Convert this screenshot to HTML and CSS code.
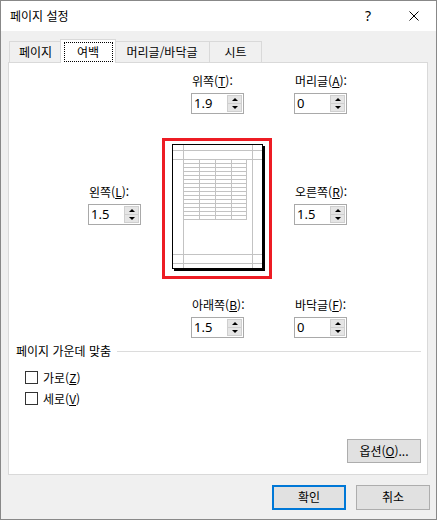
FILE: index.html
```html
<!DOCTYPE html>
<html lang="ko">
<head>
<meta charset="utf-8">
<title>페이지 설정</title>
<link rel="stylesheet" href="styles.css">
</head>
<body>
<div class="dialog">
  <div class="titlebar">
    <span class="title">페이지 설정</span>
    <span class="tb-btn help">?</span>
    <span class="tb-btn close">
      <svg width="10" height="10" viewBox="0 0 10 10"><path d="M0.5 0.5 L9.5 9.5 M9.5 0.5 L0.5 9.5" stroke="#000" stroke-width="1" fill="none"/></svg>
    </span>
  </div>
  <div class="tabs">
    <div class="tab tab-page">페이지</div>
    <div class="tab tab-active"><span class="focus">여백</span></div>
    <div class="tab tab-hf">머리글/바닥글</div>
    <div class="tab tab-sheet">시트</div>
  </div>
  <div class="panel">
    <div class="margins">
      <div class="field f-top">
        <div class="lbl">위쪽(<u>T</u>):</div>
        <div class="spin"><span class="val">1.9</span><span class="btns"><span class="sb"><i class="up"></i></span><span class="sb"><i class="down"></i></span></span></div>
      </div>
      <div class="field f-header">
        <div class="lbl">머리글(<u>A</u>):</div>
        <div class="spin"><span class="val">0</span><span class="btns"><span class="sb"><i class="up"></i></span><span class="sb"><i class="down"></i></span></span></div>
      </div>
      <div class="field f-left">
        <div class="lbl">왼쪽(<u>L</u>):</div>
        <div class="spin"><span class="val">1.5</span><span class="btns"><span class="sb"><i class="up"></i></span><span class="sb"><i class="down"></i></span></span></div>
      </div>
      <div class="preview">
        <svg width="93" height="127" viewBox="0 0 93 127">
          <rect x="2" y="2" width="91" height="125" fill="#000"/>
          <rect x="0.5" y="0.5" width="90" height="124" fill="#fff" stroke="#000"/>
          <g stroke="#c3c3c3" stroke-width="1" fill="none">
            <path d="M11.5 1 V124 M80.5 1 V124 M1 6.5 H90 M1 15.5 H90 M1 110.5 H90 M1 119.5 H90"/>
            <path d="M27.5 15 V76 M43.5 15 V76 M59.5 15 V76 M74.5 15 V76"/>
            <path d="M11 19.5 H75 M11 23.5 H75 M11 27.5 H75 M11 31.5 H75 M11 35.5 H75 M11 39.5 H75 M11 43.5 H75 M11 47.5 H75 M11 51.5 H75 M11 55.5 H75 M11 59.5 H75 M11 63.5 H75 M11 67.5 H75 M11 71.5 H75 M11 75.5 H75"/>
          </g>
        </svg>
      </div>
      <div class="field f-right">
        <div class="lbl">오른쪽(<u>R</u>):</div>
        <div class="spin"><span class="val">1.5</span><span class="btns"><span class="sb"><i class="up"></i></span><span class="sb"><i class="down"></i></span></span></div>
      </div>
      <div class="field f-bottom">
        <div class="lbl">아래쪽(<u>B</u>):</div>
        <div class="spin"><span class="val">1.5</span><span class="btns"><span class="sb"><i class="up"></i></span><span class="sb"><i class="down"></i></span></span></div>
      </div>
      <div class="field f-footer">
        <div class="lbl">바닥글(<u>F</u>):</div>
        <div class="spin"><span class="val">0</span><span class="btns"><span class="sb"><i class="up"></i></span><span class="sb"><i class="down"></i></span></span></div>
      </div>
    </div>
    <div class="group-title"><span>페이지 가운데 맞춤</span><span class="rule"></span></div>
    <div class="checks">
      <label class="check"><span class="box"></span><span>가로(<u>Z</u>)</span></label>
      <label class="check"><span class="box"></span><span>세로(<u>V</u>)</span></label>
    </div>
    <div class="options-row">
      <button class="btn">옵션(<u>O</u>)...</button>
    </div>
  </div>
  <div class="footer">
    <button class="btn btn-default">확인</button>
    <button class="btn">취소</button>
  </div>
</div>
</body>
</html>
```

FILE: styles.css
```css
* { box-sizing: border-box; }
html, body { margin: 0; padding: 0; background: #fff; }
body {
  font-family: "Noto Sans CJK KR", "Noto Sans", sans-serif;
  font-size: 12px;
  color: #000;
}
u { text-decoration: underline; text-underline-offset: 1px; }

.dialog {
  width: 437px;
  height: 520px;
  border: 1px solid #888;
  background: #f0f0f0;
  display: flex;
  flex-direction: column;
}

.titlebar {
  height: 30px;
  background: #fff;
  display: flex;
  align-items: center;
  padding-left: 9px;
}
.title { flex: 1; line-height: 16px; padding-bottom: 1px; }
.tb-btn {
  width: 45px;
  height: 30px;
  display: flex;
  align-items: center;
  justify-content: center;
}
.help { font-family: "Noto Sans", sans-serif; font-size: 14px; width: 46px; padding-bottom: 2px; }
.close svg { display: block; margin-bottom: 1px; }

.tabs {
  height: 31px;
  display: flex;
  align-items: flex-end;
  padding-left: 8px;
}
.tab {
  position: relative;
  height: 21px;
  border: 1px solid #d9d9d9;
  border-bottom: none;
  background: #f0f0f0;
  display: flex;
  align-items: center;
  justify-content: center;
  line-height: 16px;
  padding-bottom: 1px;
}
.tab-page { width: 53px; }
.tab-hf { width: 96px; }
.tab-sheet { width: 53px; margin-left: -1px; }
.tab-active {
  z-index: 1;
  width: 56px;
  height: 24px;
  margin: 0 -2px -1px -2px;
  background: #fff;
  padding-bottom: 2px;
}
.focus {
  display: block;
  width: 47px;
  height: 18px;
  margin-top: 2px;
  outline: 1px dotted #000;
  text-align: center;
  line-height: 17px;
}

.panel {
  width: 420px;
  height: 413px;
  margin-left: 7px;
  background: #fff;
  border: 1px solid #d9d9d9;
  display: flex;
  flex-direction: column;
  padding-bottom: 11px;
}

.margins {
  display: grid;
  grid-template-columns: 79px 74px 110px 22px 1fr;
  padding-top: 10px;
}
.f-top { grid-column: 3; grid-row: 1; margin-left: 29px; }
.f-header { grid-column: 5; grid-row: 1; }
.f-left { grid-column: 2; grid-row: 2; margin-top: 70px; }
.preview { grid-column: 3; grid-row: 2; margin-top: 24px; }
.f-right { grid-column: 5; grid-row: 2; margin-top: 70px; }
.f-bottom { grid-column: 3; grid-row: 3; margin-left: 29px; margin-top: 18px; }
.f-footer { grid-column: 5; grid-row: 3; margin-top: 18px; }

.lbl { line-height: 16px; margin-bottom: 4px; margin-left: 1px; }

.spin {
  width: 53px;
  height: 21px;
  border: 1px solid #a9a9a9;
  background: #fff;
  display: flex;
}
.val {
  flex: 1;
  padding-left: 2px;
  font-family: "Noto Sans", sans-serif;
  font-size: 13px;
  line-height: 19px;
}
.btns {
  width: 16px;
  display: flex;
  flex-direction: column;
  padding: 1px 1px 1px 0;
}
.sb {
  flex: 1;
  background: #e5e5e5;
  border: 1px solid #cfcfcf;
  display: flex;
  align-items: center;
  justify-content: center;
}
.sb + .sb { border-top: none; }
.up, .down { width: 0; height: 0; border-left: 3px solid transparent; border-right: 3px solid transparent; }
.up { border-bottom: 3px solid #000; }
.down { border-top: 3px solid #000; }

.preview {
  width: 110px;
  height: 141px;
  border: 3px solid #ed1c24;
  padding: 3px 0 0 7px;
}
.preview svg { display: block; }

.group-title {
  display: flex;
  align-items: center;
  gap: 6px;
  margin-top: 5px;
  padding: 0 6px 0 7px;
  line-height: 16px;
}
.rule { flex: 1; height: 1px; background: #dcdcdc; }

.checks {
  margin-top: 8px;
  padding-left: 16px;
  display: flex;
  flex-direction: column;
}
.check {
  height: 21px;
  display: flex;
  align-items: center;
  gap: 5px;
  line-height: 16px;
}
.box {
  width: 13px;
  height: 13px;
  border: 1px solid #333;
  background: #fff;
}

.options-row {
  margin-top: auto;
  display: flex;
  justify-content: flex-end;
  padding-right: 6px;
}

.btn {
  width: 74px;
  height: 24px;
  border: 1px solid #adadad;
  background: #e1e1e1;
  font-family: "Noto Sans CJK KR", "Noto Sans", sans-serif;
  font-size: 12px;
  line-height: 16px;
  color: #000;
  padding: 0 0 1px 0;
  margin: 0;
}

.footer {
  display: flex;
  justify-content: flex-end;
  gap: 10px;
  margin-top: 10px;
  padding-right: 6px;
}
.footer .btn { height: 25px; }
.btn-default { border: 2px solid #0078d7; }
```
